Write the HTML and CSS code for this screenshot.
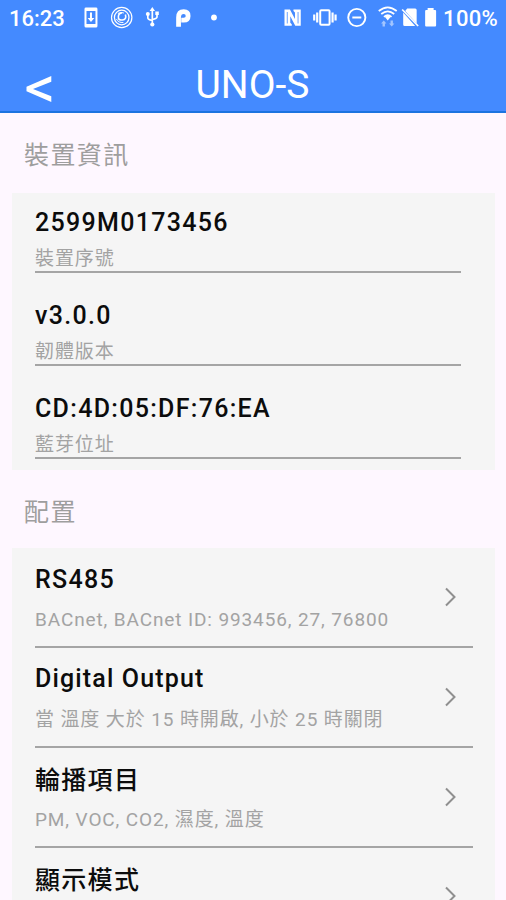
FILE: index.html
```html
<!DOCTYPE html>
<html lang="zh-Hant">
<head>
    <meta charset="UTF-8">
    <meta name="viewport" content="width=device-width, initial-scale=1.0">
    <title>UNO-S</title>
    <link rel="stylesheet" href="styles.css">
</head>
<body>
    <header class="app-header">
        <div class="status-bar">
            <span class="status-time">16:23</span>
            <svg class="status-left" width="140" height="26" viewBox="80 5 140 26">
                <!-- download to phone -->
                <path fill="#fff" fill-rule="evenodd" d="M86 7.500h10q1.500 0 1.500 1.500v17q0 1.500-1.500 1.500h-10q-1.500 0-1.500-1.500v-17q0-1.500 1.500-1.500zM86.500 11v13h9v-13z"/>
                <path fill="#fff" d="M90 12.500h2v5.500h2.400l-3.400 4-3.400-4h2.400z"/>
                <!-- browser badge -->
                <g fill="none" stroke="#fff">
                    <circle cx="121.800" cy="17.500" r="10.200" stroke-width="1.200"/>
                    <circle cx="121.800" cy="17.500" r="7.300" stroke-width="1.300"/>
                    <path stroke-width="1.600" d="M125.500 14.500q1.500 5-3 5.500t-4-3.500q0-3 3.500-3.500"/>
                    <path stroke-width="1" d="M116.500 19q2 4 7 3.500M118 13.500q3-2 6-.5"/>
                </g>
                <!-- usb -->
                <g fill="none" stroke="#fff" stroke-width="1.700">
                    <path d="M152.500 10v14M148 14.500v3.500q0 1.500 4.500 2.500M157.200 14v3q0 1.500-4.700 2.500"/>
                </g>
                <path fill="#fff" d="M152.500 7l2.700 4h-5.400zM155.500 11.500h3.500v3.500h-3.500z"/>
                <circle cx="148" cy="14" r="2" fill="#fff"/>
                <circle cx="152.500" cy="24.500" r="2.100" fill="#fff"/>
                <!-- parking -->
                <path fill="none" stroke="#fff" stroke-width="4.800" d="M178.800 26.700v-9.200q0-5.800 5.200-5.800 4.400 0 4.400 4.200t-4.400 4.200h-2.500"/>
                <circle cx="214.300" cy="17.500" r="2.900" fill="#fff"/>
            </svg>
            <svg class="status-right" width="160" height="26" viewBox="280 5 160 26">
                <!-- nfc -->
                <path fill="#fff" d="M285.500 9.500h5.500l5 9.500v-6.500l-1.500-1.500V9.500h7.300v16.300h-5.500l-5-9.500v6.500l1.500 1.500v1.500h-7.300z"/>
                <path fill="none" stroke="#448aff" stroke-width=".8" d="M288.300 12v11.500M299.100 12v11.500"/>
                <!-- vibrate -->
                <rect x="321.300" y="10.200" width="9.400" height="14.600" rx="1" fill="none" stroke="#fff" stroke-width="2"/>
                <path fill="none" stroke="#fff" stroke-width="2.200" d="M318.300 12.500v10M315.300 14.500v6M333.700 12.500v10M336.700 14.500v6"/>
                <!-- do not disturb -->
                <circle cx="358" cy="17.500" r="8.600" fill="none" stroke="#fff" stroke-width="1.900"/>
                <path stroke="#fff" stroke-width="2" d="M353.500 17.500h9"/>
                <!-- wifi -->
                <g fill="none" stroke="#fff" stroke-width="1.700">
                    <path d="M380 11q9-7.500 18 0M382.500 14q6.500-5.500 13 0M385.200 16.800q3.800-3.200 7.600 0"/>
                </g>
                <path fill="#fff" d="M385.800 16.500q3.200-1.500 6.400 0l-3.200 4z"/>
                <path fill="#fff" fill-opacity=".5" d="M385 20.500l2.700 3h-1.500v3h-2.400v-3h-1.500zM393 26.500l-2.700-3h1.500v-3h2.400v3h1.500z"/>
                <!-- no sim -->
                <path fill="#fff" d="M408.500 8.500h8q1.500 0 1.500 1.500v13.500L406.500 11zM404.500 12.500l12 13.500h-10.500q-1.500 0-1.500-1.500z"/>
                <path stroke="#fff" stroke-width="1.700" d="M403.500 9.500l16 16.500"/>
                <!-- battery -->
                <path fill="#fff" d="M429 8h6v2h1.500q1 0 1 1v14.500q0 1-1 1h-9q-1 0-1-1V11q0-1 1-1h1.500z"/>
            </svg>
            <span class="status-battery">100%</span>
        </div>
        <div class="title-bar">
            <svg class="back-icon" width="28" height="28" viewBox="0 0 28 28">
                <path fill="#fff" d="M26.300 1v5.800L8 14l18.300 7.200V27L1.500 16.200v-4.400z"/>
            </svg>
            <h1>UNO-S</h1>
        </div>
    </header>

    <main>
        <h2>裝置資訊</h2>
        <section class="card info-card">
            <div class="info-row">
                <h3>2599M0173456</h3>
                <p>裝置序號</p>
            </div>
            <div class="info-row">
                <h3>v3.0.0</h3>
                <p>韌體版本</p>
            </div>
            <div class="info-row">
                <h3>CD:4D:05:DF:76:EA</h3>
                <p>藍芽位址</p>
            </div>
        </section>

        <h2 class="config-title">配置</h2>
        <section class="card config-card">
            <div class="config-row">
                <div class="config-text latin-title">
                    <h3>RS485</h3>
                    <p>BACnet, BACnet ID: 993456, 27, 76800</p>
                </div>
                <svg class="chevron" width="14" height="20" viewBox="0 0 14 20"><path d="M2 1.500L10.500 10 2 18.500"/></svg>
            </div>
            <div class="config-row">
                <div class="config-text latin-title">
                    <h3>Digital Output</h3>
                    <p>當 溫度 大於 15 時開啟, 小於 25 時關閉</p>
                </div>
                <svg class="chevron" width="14" height="20" viewBox="0 0 14 20"><path d="M2 1.500L10.500 10 2 18.500"/></svg>
            </div>
            <div class="config-row">
                <div class="config-text">
                    <h3>輪播項目</h3>
                    <p>PM, VOC, CO2, 濕度, 溫度</p>
                </div>
                <svg class="chevron" width="14" height="20" viewBox="0 0 14 20"><path d="M2 1.500L10.500 10 2 18.500"/></svg>
            </div>
            <div class="config-row last-row">
                <div class="config-text">
                    <h3>顯示模式</h3>
                </div>
                <svg class="chevron" width="14" height="20" viewBox="0 0 14 20"><path d="M2 1.500L10.500 10 2 18.500"/></svg>
            </div>
        </section>
    </main>
</body>
</html>
```
FILE: styles.css
```css
* {
    margin: 0;
    padding: 0;
    box-sizing: border-box;
    font-family: Roboto, "Noto Sans CJK TC", sans-serif;
}

body {
    background-color: #fef7ff;
}

.app-header {
    height: 113px;
    background-color: #448aff;
    border-bottom: 2px solid #1d74e0;
    color: white;
}

.status-bar {
    display: flex;
    align-items: center;
    height: 36px;
    padding: 0 8px 0 9px;
    font-size: 22px;
    font-weight: 500;
}

.status-time {
    width: 71px;
    padding-top: 1px;
}

.status-right {
    margin-left: 60px;
}

.status-battery {
    margin-left: 4px;
    padding-top: 1px;
    letter-spacing: 0.3px;
}

.title-bar {
    display: grid;
    grid-template-columns: 28px 1fr 28px;
    align-items: center;
    height: 75px;
    padding: 0 25px;
}

.back-icon {
    margin-top: 31px;
}

.title-bar h1 {
    margin-top: 22px;
    padding-right: 1px;
    font-size: 39px;
    font-weight: 400;
    line-height: 48px;
    text-align: center;
}

h2 {
    height: 80px;
    padding: 24px 24px 0;
    color: #9e9e9e;
    font-size: 25px;
    font-weight: 400;
    letter-spacing: 1.4px;
    line-height: 38px;
}

.config-title {
    height: 78px;
}

.card {
    margin: 0 11px 0 12px;
    padding-left: 23px;
    background-color: #f5f5f5;
}

.card h3 {
    color: #0c0c0c;
    font-size: 25px;
    font-weight: 500;
    letter-spacing: 1.3px;
    line-height: 30px;
}

.card p {
    color: #a3a3a3;
    font-size: 19px;
    font-weight: 400;
    letter-spacing: 0.88px;
    line-height: 28px;
    white-space: nowrap;
}

.info-card {
    height: 277px;
    padding-right: 34px;
}

.info-row {
    height: 93px;
    padding-top: 28px;
    border-bottom: 2px solid #a5a5a5;
}

.info-row:first-child {
    height: 80px;
    padding-top: 15px;
}

.info-row p {
    margin-top: 8px;
    line-height: 26px;
}

.config-card {
    height: 352px;
    padding-right: 22px;
    overflow: hidden;
}

.config-row {
    display: flex;
    justify-content: space-between;
    align-items: center;
    height: 100px;
    padding-right: 15px;
    border-bottom: 2px solid #a5a5a5;
}

.config-text {
    align-self: flex-start;
    padding-top: 18px;
}

.config-text p {
    margin-top: 10px;
}

.latin-title {
    padding-top: 16px;
}

.latin-title h3 {
    letter-spacing: 1.15px;
}

.latin-title p {
    margin-top: 12px;
}

.config-row:first-child .config-text {
    padding-top: 17px;
}

.config-row:first-child h3 {
    letter-spacing: 1.3px;
}

.config-row:first-child p {
    margin-top: 11px;
}

.last-row {
    height: 98px;
}

.chevron path {
    fill: none;
    stroke: #8f8f8f;
    stroke-width: 2;
}
```
